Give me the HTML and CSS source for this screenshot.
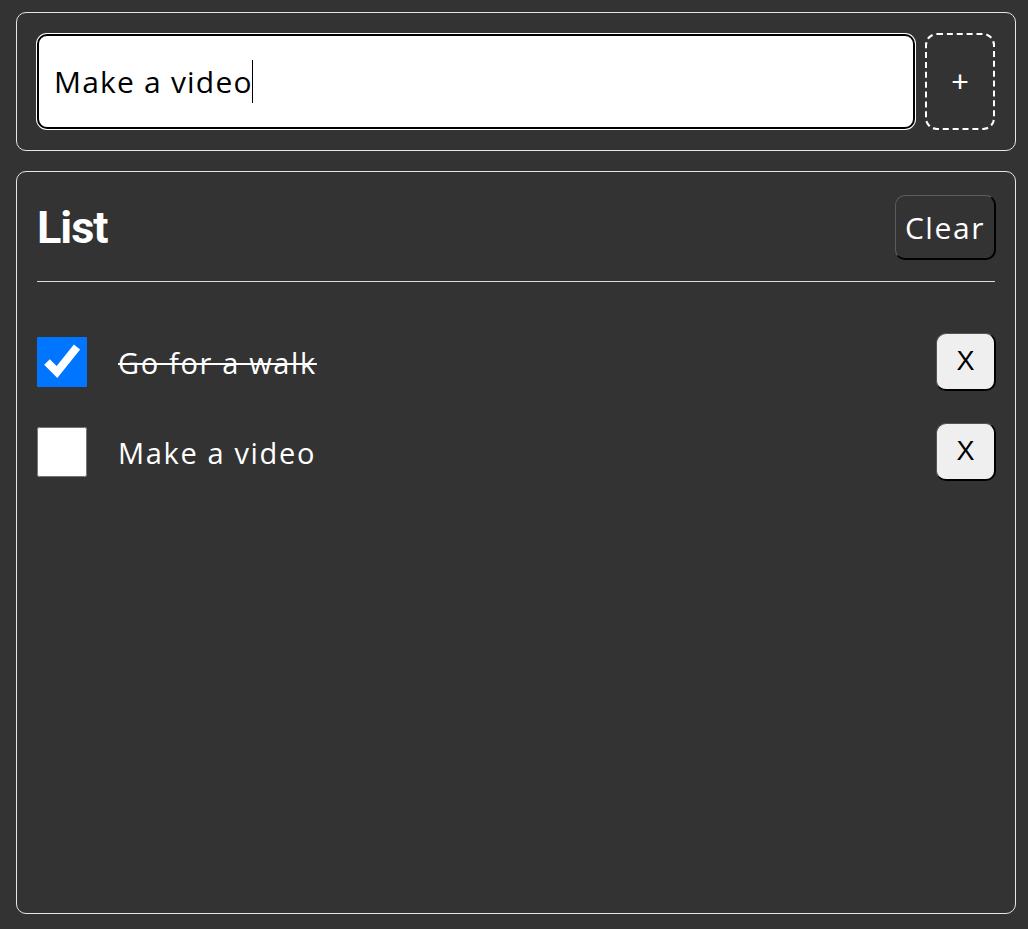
FILE: index.html
```html
<!DOCTYPE html>
<html lang="en">
<head>
<meta charset="utf-8">
<title>Todo</title>
<link rel="stylesheet" href="styles.css">
</head>
<body>
<main class="app">
  <section class="card add-card">
    <form class="add-form">
      <div class="input-wrap">
        <input class="add-input" type="text" value="Make a video">
        <span class="caret"></span>
      </div>
      <button class="add-btn" type="button">+</button>
    </form>
  </section>
  <section class="card list-card">
    <header class="list-header">
      <h2 class="list-title">List</h2>
      <button class="clear-btn" type="button">Clear</button>
    </header>
    <ul class="items">
      <li class="item">
        <input class="check" type="checkbox" checked>
        <span class="item-text done">Go for a walk</span>
        <button class="del-btn" type="button">X</button>
      </li>
      <li class="item">
        <input class="check" type="checkbox">
        <span class="item-text">Make a video</span>
        <button class="del-btn" type="button">X</button>
      </li>
    </ul>
  </section>
</main>
</body>
</html>
```

FILE: styles.css
```css
html, body {
  margin: 0;
  padding: 0;
  background: #333333;
}
body {
  font-family: "Open Sans", "Liberation Sans", sans-serif;
  color: #ffffff;
}
.app {
  width: 1000px;
  padding: 12px 0 0 16px;
  display: flex;
  flex-direction: column;
  gap: 20px;
}
.card {
  box-sizing: border-box;
  border: 1px solid #e6e6e6;
  border-radius: 10px;
  padding: 20px;
}
.add-form {
  display: flex;
  gap: 10px;
  margin: 0;
}
.input-wrap {
  flex: 1;
  position: relative;
  display: flex;
}
.add-input {
  flex: 1;
  box-sizing: border-box;
  height: 95px;
  margin: 1px 0;
  border: 2px solid #000;
  border-radius: 10px;
  box-shadow: 0 0 0 1px #fff;
  outline: none;
  background: #fff;
  color: #000;
  font-family: "Open Sans", "Liberation Sans", sans-serif;
  font-size: 30px;
  letter-spacing: 1.2px;
  padding: 0 0 0 15px;
}
.caret {
  position: absolute;
  left: 215px;
  top: 27px;
  width: 1px;
  height: 43px;
  background: #000;
}
.add-btn {
  width: 70px;
  box-sizing: border-box;
  background: transparent;
  border: 2px dashed #fff;
  border-radius: 12px;
  color: #fff;
  font-family: "Liberation Sans", sans-serif;
  font-size: 30px;
  line-height: 1;
  padding: 0;
}
.list-card {
  height: 743px;
}
.list-header {
  display: flex;
  align-items: center;
  justify-content: space-between;
  padding: 3px 0 21px;
  border-bottom: 1px solid #dcdcdc;
}
.list-title {
  margin: 0;
  font-family: Roboto, "Liberation Sans", sans-serif;
  font-weight: 700;
  font-size: 45px;
  line-height: 1;
  letter-spacing: -1px;
}
.clear-btn {
  box-sizing: border-box;
  height: 65px;
  width: 101px;
  margin-right: -1px;
  background: #333;
  color: #fff;
  border-style: solid;
  border-color: #5c5c5c #000 #000 #5c5c5c;
  border-width: 1px 2px 2px 1px;
  border-radius: 10px;
  font-family: "Open Sans", "Liberation Sans", sans-serif;
  font-size: 30px;
  letter-spacing: 1.6px;
  padding: 0;
}
.items {
  list-style: none;
  margin: 0;
  padding: 51px 0 0;
  display: flex;
  flex-direction: column;
  gap: 32px;
}
.item {
  display: flex;
  align-items: center;
  height: 58px;
}
.check {
  width: 50px;
  height: 50px;
  margin: 0 31px 0 0;
  flex: none;
}
.item-text {
  flex: 1;
  font-size: 29px;
  letter-spacing: 1.65px;
}
.item-text.done {
  text-decoration: line-through;
  text-decoration-thickness: 2px;
}
.del-btn {
  box-sizing: border-box;
  width: 60px;
  height: 58px;
  margin-right: -1px;
  background: #efefef;
  color: #000;
  border-style: solid;
  border-color: #555 #000 #000 #555;
  border-width: 1px 2px 2px 1px;
  border-radius: 10px;
  font-family: "Liberation Sans", sans-serif;
  font-size: 27px;
  padding: 0;
}
```
